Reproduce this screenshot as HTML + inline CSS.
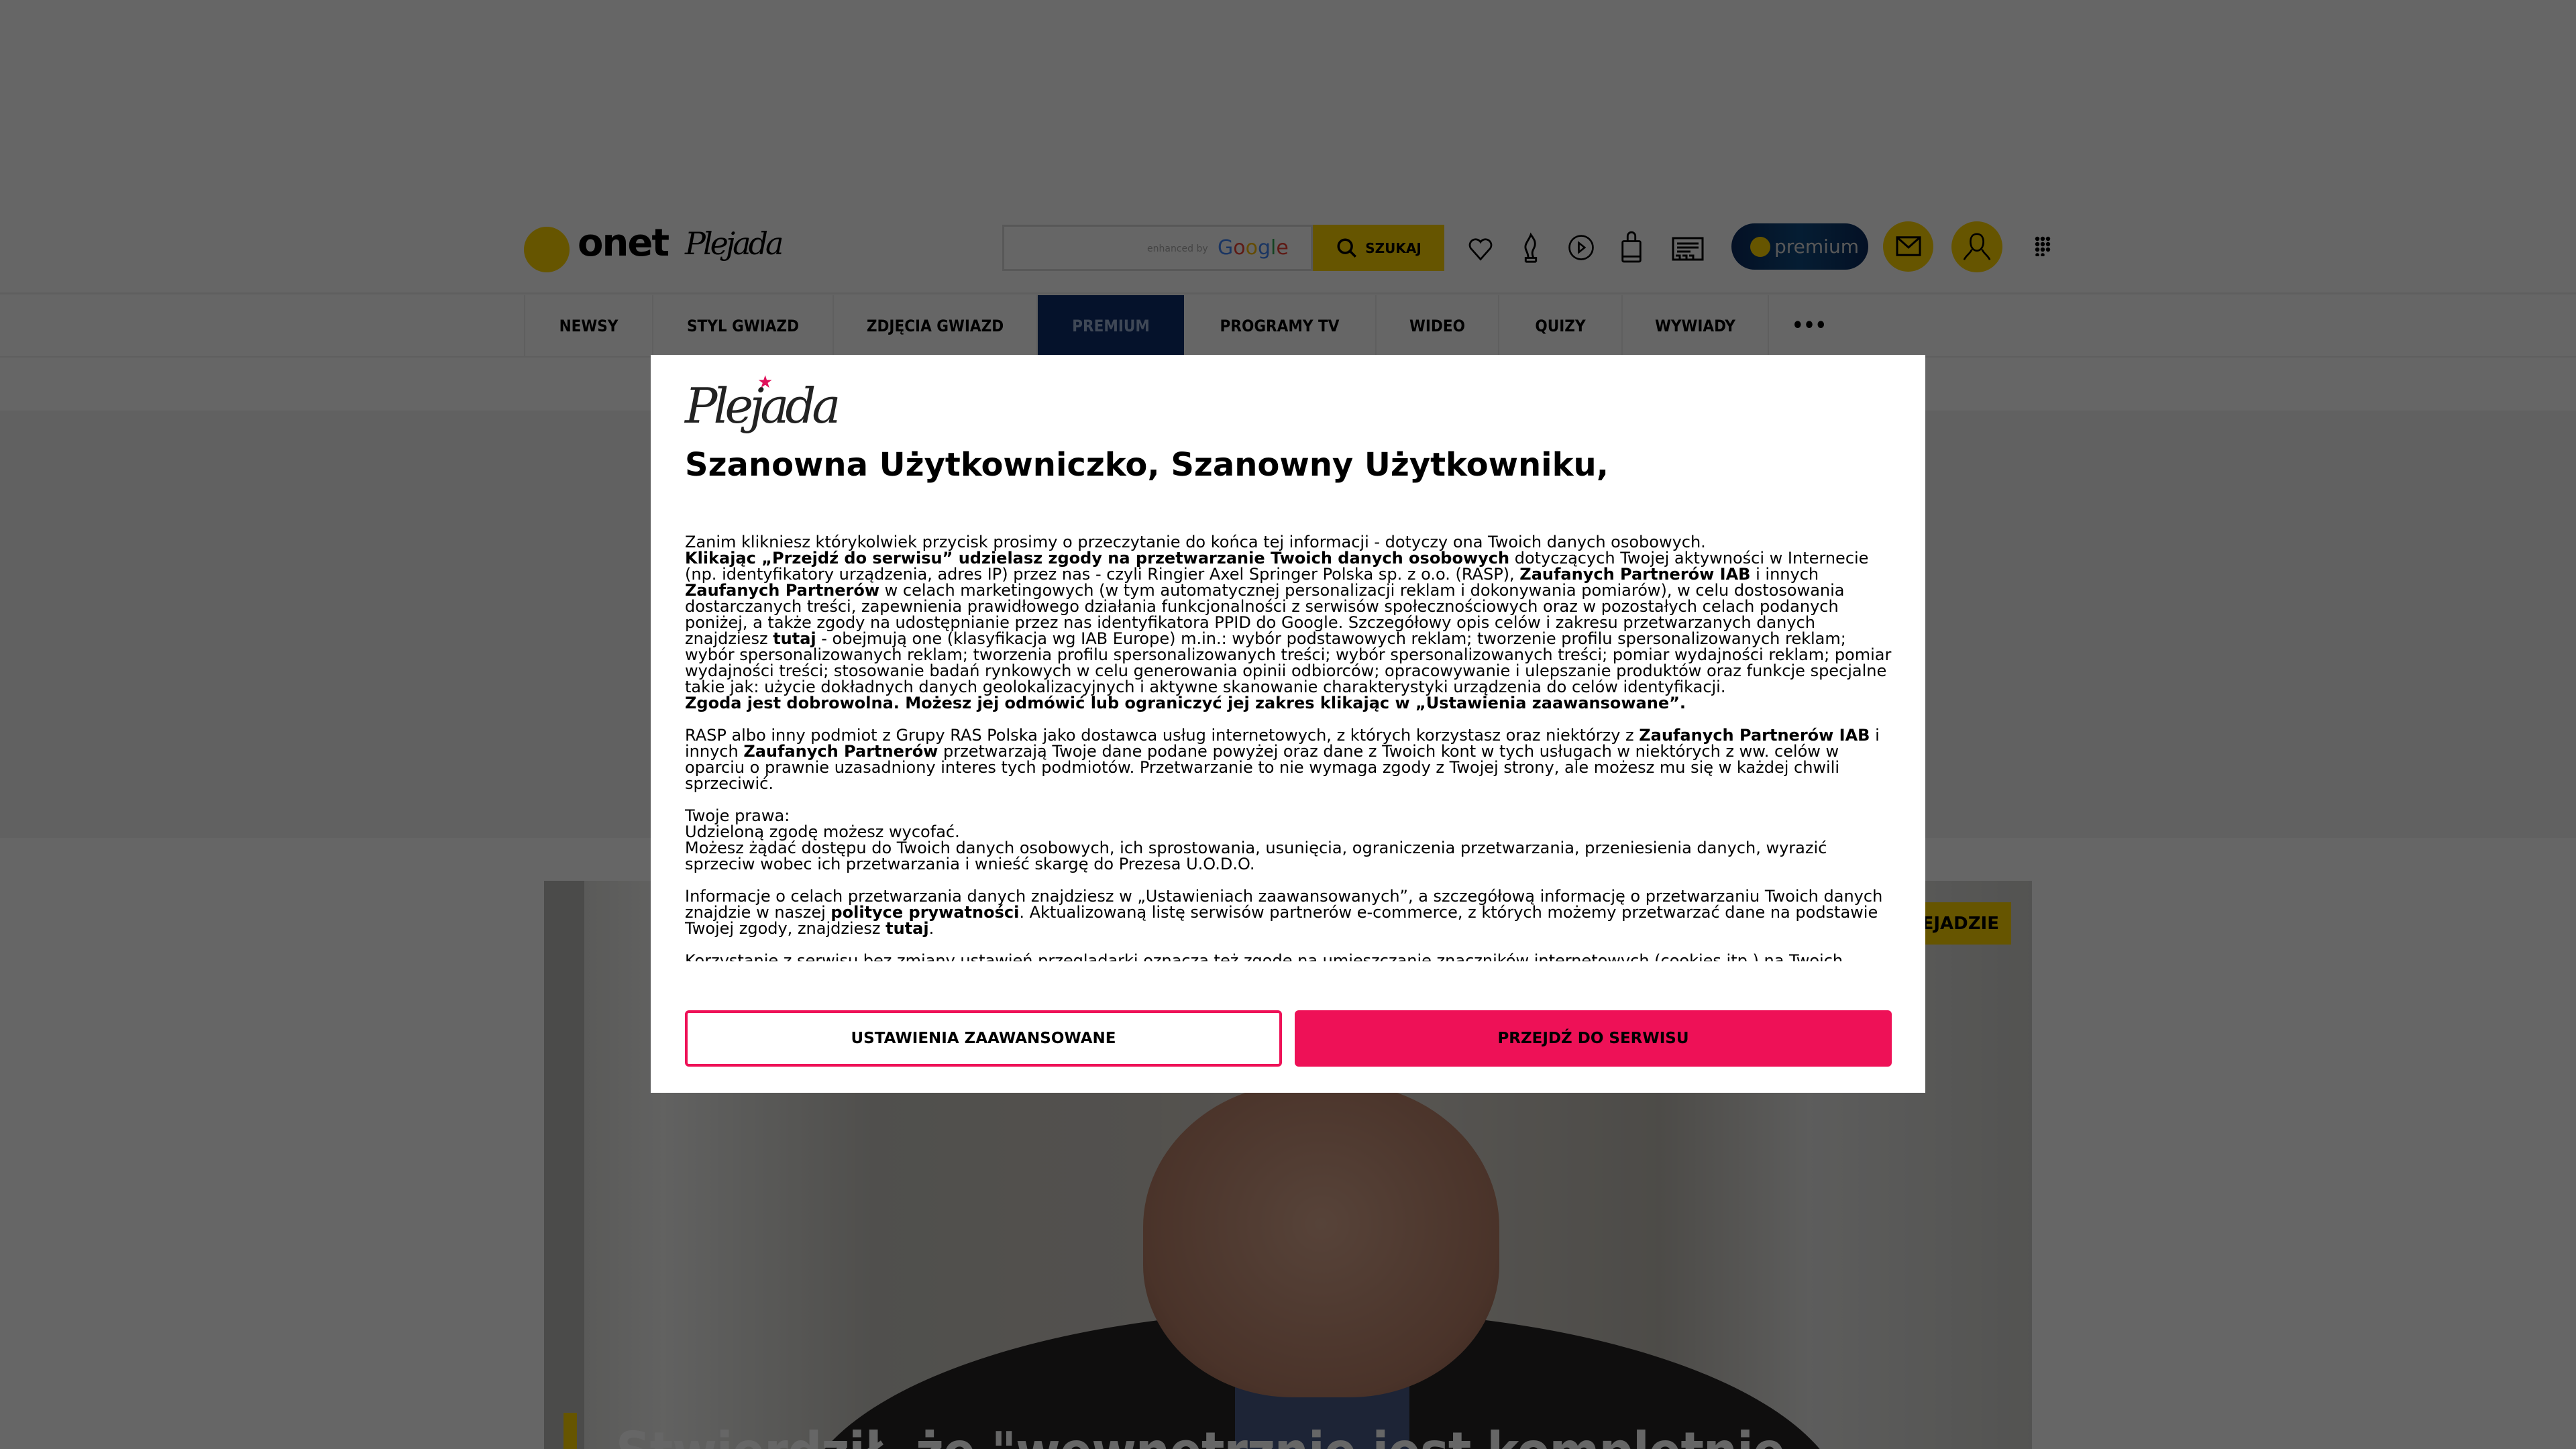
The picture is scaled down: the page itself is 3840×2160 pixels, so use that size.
<!DOCTYPE html>
<html><head><meta charset="utf-8">
<style>
*{margin:0;padding:0;box-sizing:border-box}
html,body{width:3840px;height:2160px;overflow:hidden}
body{background:#fff;position:relative;font-family:"DejaVu Sans","Liberation Sans",sans-serif;color:#000}
.abs{position:absolute}
.nav{position:absolute;top:440px;left:781px;height:91px;display:flex;border-left:2px solid #eee}
.nav div{height:91px;display:flex;align-items:center;justify-content:center;font-weight:bold;font-size:24px;border-right:2px solid #eee;font-family:"DejaVu Sans Condensed","DejaVu Sans",sans-serif}
#ov{position:absolute;left:0;top:0;width:3840px;height:2160px;background:rgba(0,0,0,0.6)}
#modal{position:absolute;left:970px;top:529px;width:1900px;height:1100px;background:#fff}
.body{position:absolute;left:51px;top:267px;width:1830px;height:637px;overflow:hidden;font-size:24px;line-height:24px;white-space:nowrap}
.body p{margin-bottom:24px}
.btn{position:absolute;top:977px;height:84px;width:890px;border-radius:6px;display:flex;align-items:center;justify-content:center;font-weight:bold;font-size:23px}
</style></head><body>
<div class="abs" style="left:781px;top:338px;width:68px;height:68px;border-radius:50%;background:#ffd400"></div>
<div class="abs" style="left:861px;top:330px;font-size:56px;font-weight:bold;letter-spacing:-2px">onet</div>
<div class="abs" style="left:1021px;top:336px;font-size:46px;font-style:italic;font-family:'DejaVu Serif',serif;letter-spacing:-4px">Plejada</div>
<div class="abs" style="left:1494px;top:335px;width:463px;height:69px;border:3px solid #ddd;background:#fff"></div>
<div class="abs" style="left:1710px;top:363px;font-size:14px;color:#aaa">enhanced by</div>
<div class="abs" style="left:1815px;top:352px;font-size:30px;color:#4285f4">G<span style="color:#ea4335">o</span><span style="color:#fbbc05">o</span>g<span style="color:#34a853">l</span><span style="color:#ea4335">e</span></div>
<div class="abs" style="left:1957px;top:335px;width:196px;height:69px;background:#ffd400;display:flex;align-items:center;justify-content:center;font-weight:bold;font-size:20px">
<svg width="34" height="34" viewBox="0 0 24 24" style="margin-right:10px"><circle cx="10" cy="10" r="7" fill="none" stroke="#000" stroke-width="2.5"/><path d="M15 15l6 6" stroke="#000" stroke-width="2.5"/></svg>SZUKAJ</div>
<svg class="abs" style="left:2185px;top:348px" width="44" height="44" viewBox="0 0 24 24" fill="none" stroke="#000" stroke-width="1.5"><path d="M12 21l-8-9a4.5 4.5 0 018-5 4.5 4.5 0 018 5z"/></svg>
<svg class="abs" style="left:2262px;top:344px" width="40" height="50" viewBox="0 0 20 26" fill="none" stroke="#000" stroke-width="1.5"><path d="M6 24h8M7 21h6M8 21c0-5-3-6-2-10 1-3 3-5 4-8 2 3 4 5 3 9-1 3-3 4-1 9M6 24v-3h8v3"/></svg>
<svg class="abs" style="left:2336px;top:348px" width="42" height="42" viewBox="0 0 24 24" fill="none" stroke="#000" stroke-width="1.5"><circle cx="12" cy="12" r="10"/><path d="M10 8l5 4-5 4z"/></svg>
<svg class="abs" style="left:2413px;top:344px" width="38" height="50" viewBox="0 0 20 26" fill="none" stroke="#000" stroke-width="1.5"><rect x="3" y="8" width="14" height="16" rx="1"/><path d="M7 8V4a3 3 0 016 0v4M3 20h14"/></svg>
<svg class="abs" style="left:2490px;top:350px" width="52" height="42" viewBox="0 0 26 20" fill="none" stroke="#000" stroke-width="1.5"><rect x="2" y="2" width="22" height="16"/><path d="M5 6h16M5 9h16M5 12h10M4 15h3v3M9 15h3v3M14 15h3v3"/></svg>
<div class="abs" style="left:2581px;top:333px;width:204px;height:69px;border-radius:35px;background:linear-gradient(90deg,#0b2a5c,#0e4a80 50%,#0b2a5c);display:flex;align-items:center;padding-left:28px;color:#ddd;font-size:28px">
<span style="display:inline-block;width:30px;height:30px;border-radius:50%;background:#ffd400;margin-right:6px"></span>premium</div>
<div class="abs" style="left:2807px;top:330px;width:75px;height:75px;border-radius:50%;background:#ffd400"></div>
<svg class="abs" style="left:2826px;top:350px" width="38" height="34" viewBox="0 0 20 18" fill="none" stroke="#000" stroke-width="1.6"><rect x="1" y="2" width="18" height="14"/><path d="M1 2l9 8 9-8"/></svg>
<div class="abs" style="left:2909px;top:330px;width:76px;height:76px;border-radius:50%;background:#ffd400"></div>
<svg class="abs" style="left:2925px;top:345px" width="44" height="46" viewBox="0 0 22 24" fill="none" stroke="#000" stroke-width="1.4"><path d="M11 2c-3 0-5 2-5 6s2 7 5 7 5-3 5-7-2-6-5-6zM7 14c-1 3-4 4-6 8M15 14c1 3 4 4 6 8"/></svg>
<svg class="abs" style="left:3033px;top:352px" width="26" height="30" viewBox="0 0 13 15"><g fill="#000"><circle cx="2" cy="2" r="1.6"/><circle cx="6" cy="2" r="1.6"/><circle cx="10" cy="2" r="1.6"/><circle cx="2" cy="6" r="1.6"/><circle cx="6" cy="6" r="1.6"/><circle cx="10" cy="6" r="1.6"/><circle cx="2" cy="10" r="1.6"/><circle cx="6" cy="10" r="1.6"/><circle cx="10" cy="10" r="1.6"/><circle cx="2" cy="14" r="1.4"/><circle cx="6" cy="14" r="1.4"/></g></svg>
<div class="abs" style="left:0;top:436px;width:3840px;height:3px;background:#eee"></div>
<div class="nav">
<div style="width:191px">NEWSY</div><div style="width:269px">STYL GWIAZD</div><div style="width:304px">ZDJĘCIA GWIAZD</div>
<div style="width:218px;background:#0d2d6b;color:#9fb3d8;border-right:none">PREMIUM</div>
<div style="width:287px">PROGRAMY TV</div><div style="width:183px">WIDEO</div><div style="width:184px">QUIZY</div><div style="width:218px">WYWIADY</div>
<div style="width:120px;border-right:none;font-size:30px">•••</div></div>
<div class="abs" style="left:0;top:531px;width:3840px;height:2px;background:#eee"></div>
<div class="abs" style="left:0;top:612px;width:3840px;height:637px;background:#f2f2f2"></div>
<div class="abs" style="left:811px;top:1313px;width:2218px;height:847px;overflow:hidden;background:linear-gradient(90deg,#d8d8d4 0,#f4f4f2 8%,#e0e0dc 14%,#c8c6c0 22%,#cfcac2 40%,#ddd8d0 55%,#c0bcb4 75%,#e8e8e6 85%,#d0d0cc 100%)">
<div class="abs" style="left:0;top:0;width:60px;height:847px;background:#bcbcb8"></div>
<div class="abs" style="left:380px;top:640px;width:1560px;height:600px;border-radius:50% 50% 0 0;background:#262424"></div>
<div class="abs" style="left:1030px;top:680px;width:260px;height:300px;background:#4a5a88"></div>
<div class="abs" style="left:893px;top:300px;width:531px;height:470px;border-radius:46% 46% 42% 42%;background:radial-gradient(ellipse at 50% 45%,#d9a88f,#b98068 70%,#8a5a48)"></div>
<div class="abs" style="left:29px;top:793px;width:20px;height:60px;background:#ffd400"></div>
<div class="abs" style="left:107px;top:805px;font-size:80px;font-weight:bold;color:#fff;white-space:nowrap;font-family:'DejaVu Sans Condensed','DejaVu Sans',sans-serif;letter-spacing:-1px">Stwierdził, że "wewnętrznie jest kompletnie</div>
</div>
<div class="abs" style="left:2853px;top:1345px;width:145px;height:63px;background:#ffd400;font-weight:bold;font-size:26px;display:flex;align-items:center;justify-content:flex-end;padding-right:18px">EJADZIE</div>
<div id="ov"></div>
<div id="modal">
<div class="abs" style="left:51px;top:34px;font-size:72px;font-style:italic;font-family:'DejaVu Serif',serif;letter-spacing:-6px;color:#222">Plejada<span style="position:absolute;left:108px;top:-8px;color:#e0105a;font-size:26px;font-style:normal">★</span></div>
<div class="abs" style="left:51px;top:136px;font-size:48px;font-weight:bold;white-space:nowrap">Szanowna Użytkowniczko, Szanowny Użytkowniku,</div>
<div class="body">
<p>Zanim klikniesz którykolwiek przycisk prosimy o przeczytanie do końca tej informacji - dotyczy ona Twoich danych osobowych.<br>
<b>Klikając „Przejdź do serwisu” udzielasz zgody na przetwarzanie Twoich danych osobowych</b> dotyczących Twojej aktywności w Internecie<br>
(np. identyfikatory urządzenia, adres IP) przez nas - czyli Ringier Axel Springer Polska sp. z o.o. (RASP), <b>Zaufanych Partnerów IAB</b> i innych<br>
<b>Zaufanych Partnerów</b> w celach marketingowych (w tym automatycznej personalizacji reklam i dokonywania pomiarów), w celu dostosowania<br>
dostarczanych treści, zapewnienia prawidłowego działania funkcjonalności z serwisów społecznościowych oraz w pozostałych celach podanych<br>
poniżej, a także zgody na udostępnianie przez nas identyfikatora PPID do Google. Szczegółowy opis celów i zakresu przetwarzanych danych<br>
znajdziesz <b>tutaj</b> - obejmują one (klasyfikacja wg IAB Europe) m.in.: wybór podstawowych reklam; tworzenie profilu spersonalizowanych reklam;<br>
wybór spersonalizowanych reklam; tworzenia profilu spersonalizowanych treści; wybór spersonalizowanych treści; pomiar wydajności reklam; pomiar<br>
wydajności treści; stosowanie badań rynkowych w celu generowania opinii odbiorców; opracowywanie i ulepszanie produktów oraz funkcje specjalne<br>
takie jak: użycie dokładnych danych geolokalizacyjnych i aktywne skanowanie charakterystyki urządzenia do celów identyfikacji.<br>
<b>Zgoda jest dobrowolna. Możesz jej odmówić lub ograniczyć jej zakres klikając w „Ustawienia zaawansowane”.</b></p>
<p>RASP albo inny podmiot z Grupy RAS Polska jako dostawca usług internetowych, z których korzystasz oraz niektórzy z <b>Zaufanych Partnerów IAB</b> i<br>
innych <b>Zaufanych Partnerów</b> przetwarzają Twoje dane podane powyżej oraz dane z Twoich kont w tych usługach w niektórych z ww. celów w<br>
oparciu o prawnie uzasadniony interes tych podmiotów. Przetwarzanie to nie wymaga zgody z Twojej strony, ale możesz mu się w każdej chwili<br>
sprzeciwić.</p>
<p>Twoje prawa:<br>Udzieloną zgodę możesz wycofać.<br>
Możesz żądać dostępu do Twoich danych osobowych, ich sprostowania, usunięcia, ograniczenia przetwarzania, przeniesienia danych, wyrazić<br>
sprzeciw wobec ich przetwarzania i wnieść skargę do Prezesa U.O.D.O.</p>
<p>Informacje o celach przetwarzania danych znajdziesz w „Ustawieniach zaawansowanych”, a szczegółową informację o przetwarzaniu Twoich danych<br>
znajdzie w naszej <b>polityce prywatności</b>. Aktualizowaną listę serwisów partnerów e-commerce, z których możemy przetwarzać dane na podstawie<br>
Twojej zgody, znajdziesz <b>tutaj</b>.</p>
<p>Korzystanie z serwisu bez zmiany ustawień przeglądarki oznacza też zgodę na umieszczanie znaczników internetowych (cookies itp.) na Twoich</p>
</div>
<div class="btn" style="left:51px;border:4px solid #ee1157;background:#fff">USTAWIENIA ZAAWANSOWANE</div>
<div class="btn" style="left:960px;background:#ee1157">PRZEJDŹ DO SERWISU</div>
</div>
</body></html>
